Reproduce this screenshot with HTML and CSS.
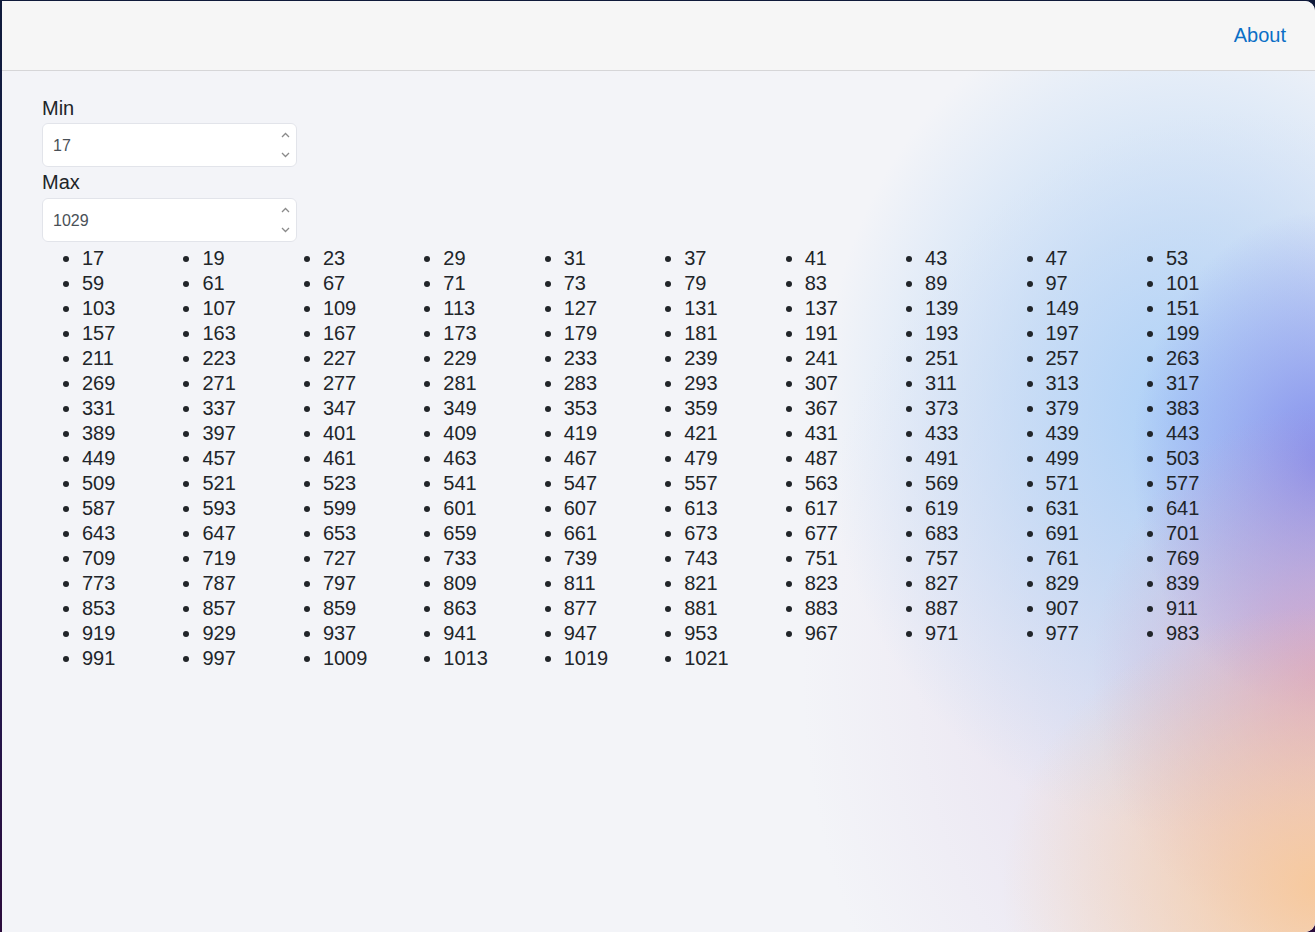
FILE: index.html
```html
<!DOCTYPE html>
<html lang="en">
<head>
<meta charset="utf-8">
<title>Primes</title>
<link rel="stylesheet" href="styles.css">
</head>
<body>
<div class="window">
  <header class="topbar">
    <a class="nav-link" href="#">About</a>
  </header>
  <main class="content">
    <label class="field-label" for="min">Min</label>
    <div class="input-wrap">
      <input id="min" class="num-input" type="text" value="17">
      <span class="spinner">
        <svg width="9" height="6" viewBox="0 0 9 6"><path d="M1 5 L4.5 1.5 L8 5" fill="none" stroke="#8a8a8a" stroke-width="1.3"/></svg>
        <svg width="9" height="6" viewBox="0 0 9 6"><path d="M1 1 L4.5 4.5 L8 1" fill="none" stroke="#8a8a8a" stroke-width="1.3"/></svg>
      </span>
    </div>
    <label class="field-label" for="max">Max</label>
    <div class="input-wrap">
      <input id="max" class="num-input" type="text" value="1029">
      <span class="spinner">
        <svg width="9" height="6" viewBox="0 0 9 6"><path d="M1 5 L4.5 1.5 L8 5" fill="none" stroke="#8a8a8a" stroke-width="1.3"/></svg>
        <svg width="9" height="6" viewBox="0 0 9 6"><path d="M1 1 L4.5 4.5 L8 1" fill="none" stroke="#8a8a8a" stroke-width="1.3"/></svg>
      </span>
    </div>
    <ul class="primes">
      <li>17</li><li>19</li><li>23</li><li>29</li><li>31</li><li>37</li><li>41</li><li>43</li><li>47</li><li>53</li>
      <li>59</li><li>61</li><li>67</li><li>71</li><li>73</li><li>79</li><li>83</li><li>89</li><li>97</li><li>101</li>
      <li>103</li><li>107</li><li>109</li><li>113</li><li>127</li><li>131</li><li>137</li><li>139</li><li>149</li><li>151</li>
      <li>157</li><li>163</li><li>167</li><li>173</li><li>179</li><li>181</li><li>191</li><li>193</li><li>197</li><li>199</li>
      <li>211</li><li>223</li><li>227</li><li>229</li><li>233</li><li>239</li><li>241</li><li>251</li><li>257</li><li>263</li>
      <li>269</li><li>271</li><li>277</li><li>281</li><li>283</li><li>293</li><li>307</li><li>311</li><li>313</li><li>317</li>
      <li>331</li><li>337</li><li>347</li><li>349</li><li>353</li><li>359</li><li>367</li><li>373</li><li>379</li><li>383</li>
      <li>389</li><li>397</li><li>401</li><li>409</li><li>419</li><li>421</li><li>431</li><li>433</li><li>439</li><li>443</li>
      <li>449</li><li>457</li><li>461</li><li>463</li><li>467</li><li>479</li><li>487</li><li>491</li><li>499</li><li>503</li>
      <li>509</li><li>521</li><li>523</li><li>541</li><li>547</li><li>557</li><li>563</li><li>569</li><li>571</li><li>577</li>
      <li>587</li><li>593</li><li>599</li><li>601</li><li>607</li><li>613</li><li>617</li><li>619</li><li>631</li><li>641</li>
      <li>643</li><li>647</li><li>653</li><li>659</li><li>661</li><li>673</li><li>677</li><li>683</li><li>691</li><li>701</li>
      <li>709</li><li>719</li><li>727</li><li>733</li><li>739</li><li>743</li><li>751</li><li>757</li><li>761</li><li>769</li>
      <li>773</li><li>787</li><li>797</li><li>809</li><li>811</li><li>821</li><li>823</li><li>827</li><li>829</li><li>839</li>
      <li>853</li><li>857</li><li>859</li><li>863</li><li>877</li><li>881</li><li>883</li><li>887</li><li>907</li><li>911</li>
      <li>919</li><li>929</li><li>937</li><li>941</li><li>947</li><li>953</li><li>967</li><li>971</li><li>977</li><li>983</li>
      <li>991</li><li>997</li><li>1009</li><li>1013</li><li>1019</li><li>1021</li>
    </ul>
  </main>
</div>
</body>
</html>
```

FILE: styles.css
```css
* { box-sizing: border-box; }

html, body {
  height: 100%;
}

body {
  margin: 0;
  padding: 1px 0 0 2px;
  background: linear-gradient(180deg, #0f1a3a 0%, #1b1f5a 50%, #2b0c3c 100%);
  font-family: "Liberation Sans", Arial, sans-serif;
  color: #212529;
  overflow: hidden;
}

.window {
  height: 931px;
  border-radius: 0 10px 10px 0;
  overflow: hidden;
  display: flex;
  flex-direction: column;
  background: #f3f4f8;
}

.topbar {
  height: 70px;
  flex: none;
  background: #f6f6f6;
  border-bottom: 1px solid #d6d6d8;
  display: flex;
  align-items: center;
  justify-content: flex-end;
  padding: 0 29px 2px 0;
}

.nav-link {
  color: #0b6fc6;
  text-decoration: none;
  font-size: 20px;
  line-height: 24px;
}

.content {
  flex: 1;
  padding: 25px 40px 0 40px;
  background:
    radial-gradient(ellipse 320px 280px at 1320px 815px, rgba(248,200,152,0.95) 0%, rgba(248,200,152,0.55) 40%, rgba(248,200,152,0) 100%),
    radial-gradient(ellipse 230px 270px at 1320px 605px, rgba(214,160,196,0.85) 0%, rgba(214,160,196,0.4) 45%, rgba(214,160,196,0) 100%),
    radial-gradient(ellipse 190px 250px at 1320px 390px, rgba(128,138,236,0.95) 0%, rgba(128,138,236,0.5) 45%, rgba(128,138,236,0) 100%),
    radial-gradient(ellipse 360px 420px at 1180px 340px, rgba(170,208,248,0.95) 0%, rgba(176,210,246,0.6) 45%, rgba(190,215,245,0) 100%),
    radial-gradient(ellipse 440px 560px at 1240px 600px, rgba(222,208,232,0.75) 0%, rgba(222,208,232,0) 100%),
    #f3f4f8;
}

.field-label {
  display: block;
  font-size: 20px;
  line-height: 24px;
  color: #212529;
  margin: 0 0 3px 0;
}

.input-wrap + .field-label {
  margin-top: 3px;
  margin-bottom: 4px;
}

.input-wrap {
  position: relative;
  width: 255px;
  height: 44px;
}

.num-input {
  width: 100%;
  height: 100%;
  border: 1px solid #e2e4ea;
  border-radius: 6px;
  background: #fff;
  padding: 2px 0 0 10px;
  font-family: "Liberation Sans", Arial, sans-serif;
  font-size: 16px;
  color: #495057;
  outline: none;
}

.spinner {
  position: absolute;
  right: 7px;
  top: 9px;
  display: flex;
  flex-direction: column;
  gap: 14px;
}

.spinner svg {
  display: block;
}

.primes {
  margin: 4px 0 0 0;
  padding: 0 0 0 40px;
  display: grid;
  grid-template-columns: repeat(10, 120.44px);
  font-size: 20px;
  line-height: 25px;
  color: #212529;
}

.primes li {
  list-style: disc;
}
```
